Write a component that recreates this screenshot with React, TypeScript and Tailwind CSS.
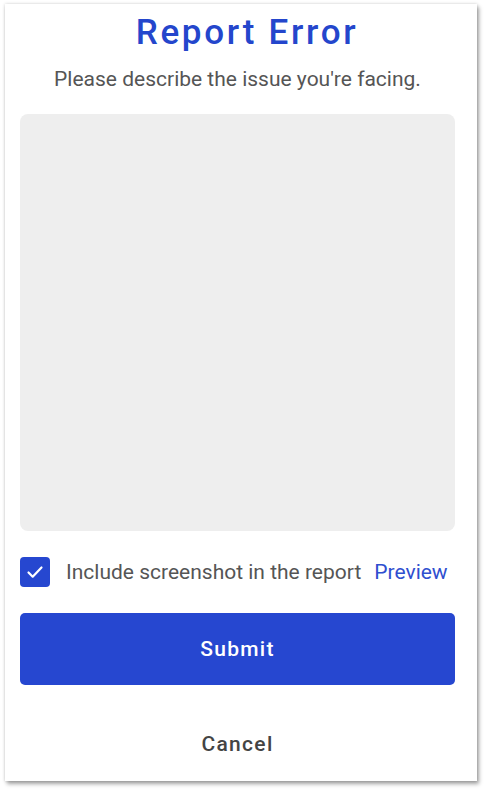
import React, { useState } from 'react';

const CheckIcon = () => (
  <svg viewBox="0 0 24 24" className="w-[24px] h-[24px]" fill="none" stroke="white" strokeWidth={2.2} strokeLinecap="round" strokeLinejoin="round">
    <path d="M5.5 12.5l4.2 4.2L18.5 7.5" />
  </svg>
);

const App = () => {
  const [message, setMessage] = useState('');
  const [includeShot, setIncludeShot] = useState(true);

  return (
    <div className="min-h-screen bg-white pl-[5px] pt-[4px] font-['Roboto',sans-serif]">
      <div className="w-[472px] h-[777px] bg-white shadow-[0_0_3px_rgba(0,0,0,0.18),2px_3px_4px_rgba(0,0,0,0.35)] pl-[15px] pr-[22px] pt-[9px] flex flex-col">
        {/* Header */}
        <h1 className="text-center text-[35px] leading-[40px] font-medium tracking-[2.7px] pl-[19px] text-[#2446cc]">
          Report Error
        </h1>
        <p className="mt-[12px] text-center text-[21px] leading-[28px] text-[#555555]">
          Please describe the issue you're facing.
        </p>

        {/* Message */}
        <textarea
          value={message}
          onChange={(e) => setMessage(e.target.value)}
          className="mt-[21px] h-[417px] w-full resize-none rounded-[8px] bg-[#eeeeee] p-3 text-[18px] text-[#333333] outline-none"
        />

        {/* Screenshot option */}
        <div className="mt-[26px] flex items-center h-[30px]">
          <button
            type="button"
            onClick={() => setIncludeShot(!includeShot)}
            className="w-[30px] h-[30px] rounded-[4px] bg-[#2647d0] flex items-center justify-center"
          >
            {includeShot && <CheckIcon />}
          </button>
          <span className="ml-[16px] text-[21px] leading-[28px] text-[#555555]">
            Include screenshot in the report
          </span>
          <a href="#" className="ml-[13px] text-[21px] leading-[28px] text-[#2f4fcf]">
            Preview
          </a>
        </div>

        {/* Actions */}
        <button
          type="button"
          className="mt-[26px] h-[72px] w-full rounded-[5px] bg-[#2647d0] pt-[2px] text-white text-[21px] font-medium tracking-[1.3px]"
        >
          Submit
        </button>
        <button
          type="button"
          className="mt-[39px] h-[40px] w-full pt-[2px] text-[21px] font-medium tracking-[1.3px] text-[#444444]"
        >
          Cancel
        </button>
      </div>
    </div>
  );
};

export default App;
